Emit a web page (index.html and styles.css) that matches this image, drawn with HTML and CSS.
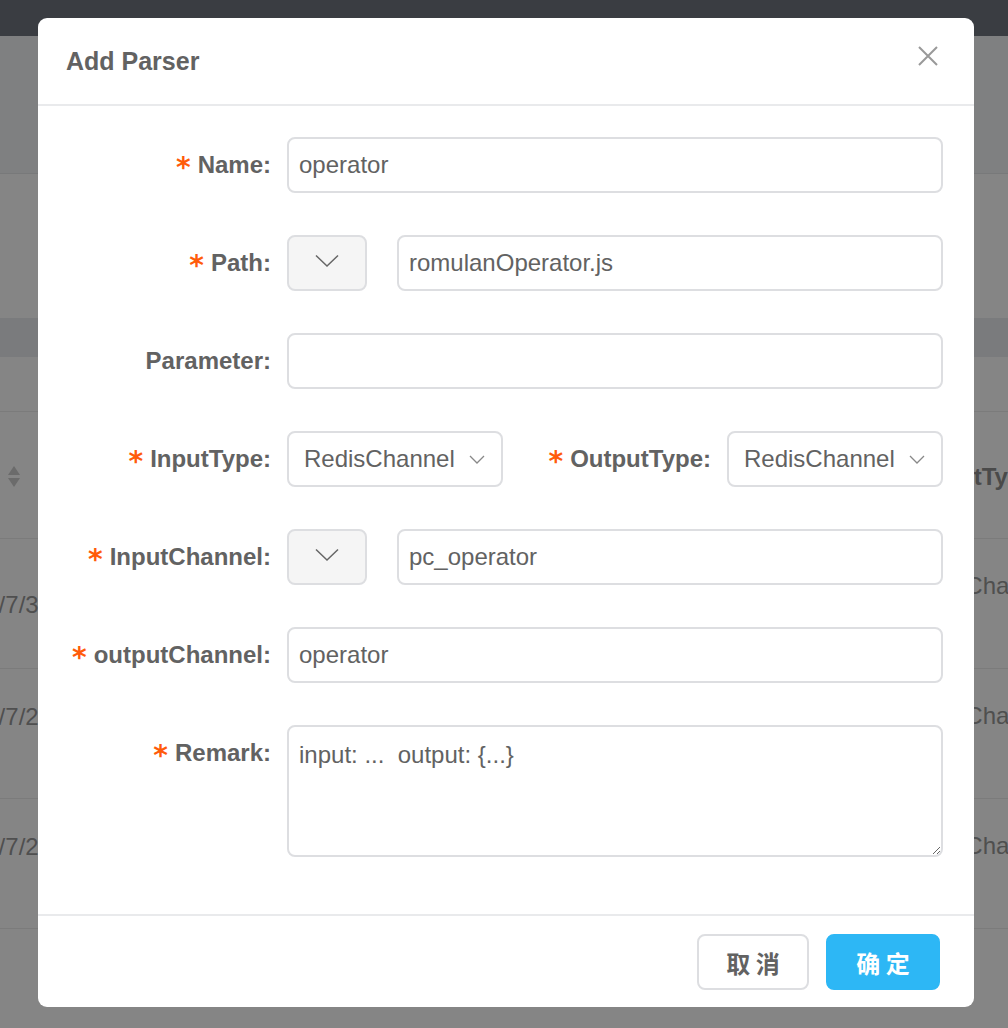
FILE: index.html
```html
<!DOCTYPE html>
<html lang="en">
<head>
<meta charset="utf-8">
<title>Add Parser</title>
<link rel="stylesheet" href="styles.css">
</head>
<body>
<div class="page">
  <div class="topbar"></div>
  <div class="sec-a"></div>
  <div class="sec-b"></div>
  <div class="band"></div>
  <div class="gap"></div>
  <div class="trow thead">
    <div class="lc-sort">
      <svg class="sort" width="14" height="21" viewBox="0 0 14 21"><path d="M7 0 L13 9 L1 9 Z" fill="#6b6b6b"/><path d="M1 12 L13 12 L7 21 Z" fill="#6b6b6b"/></svg>
    </div>
    <div class="sp"></div>
    <div class="rc rc-head">OutputType</div>
  </div>
  <div class="trow">
    <div class="lc lc-low"><span>2019/7/30</span></div>
    <div class="sp"></div>
    <div class="rc">RedisChannel</div>
  </div>
  <div class="trow">
    <div class="lc"><span>2019/7/29</span></div>
    <div class="sp"></div>
    <div class="rc">RedisChannel</div>
  </div>
  <div class="trow">
    <div class="lc"><span>2019/7/29</span></div>
    <div class="sp"></div>
    <div class="rc">RedisChannel</div>
  </div>
</div>

<div class="modal">
  <div class="m-head">
    <div class="m-title">Add Parser</div>
    <svg class="m-close" width="20" height="20" viewBox="0 0 20 20"><path d="M1 1 L19 19 M19 1 L1 19" stroke="#999" stroke-width="2" fill="none"/></svg>
  </div>
  <div class="m-body">
    <div class="row">
      <div class="label"><span class="req">*</span>Name:</div>
      <input class="inp" type="text" value="operator">
    </div>
    <div class="row">
      <div class="label"><span class="req">*</span>Path:</div>
      <div class="sel-sm"><svg width="24" height="14" viewBox="0 0 24 14"><path d="M1 1.5 L12 12 L23 1.5" stroke="#666" stroke-width="1.5" fill="none"/></svg></div>
      <input class="inp" type="text" value="romulanOperator.js">
    </div>
    <div class="row">
      <div class="label">Parameter:</div>
      <input class="inp" type="text" value="">
    </div>
    <div class="row">
      <div class="label"><span class="req">*</span>InputType:</div>
      <div class="sel"><span>RedisChannel</span><svg width="16" height="9" viewBox="0 0 16 9"><path d="M1 1 L8 8 L15 1" stroke="#888" stroke-width="1.3" fill="none"/></svg></div>
      <div class="label label-fill"><span class="req">*</span>OutputType:</div>
      <div class="sel"><span>RedisChannel</span><svg width="16" height="9" viewBox="0 0 16 9"><path d="M1 1 L8 8 L15 1" stroke="#888" stroke-width="1.3" fill="none"/></svg></div>
    </div>
    <div class="row">
      <div class="label"><span class="req">*</span>InputChannel:</div>
      <div class="sel-sm"><svg width="24" height="14" viewBox="0 0 24 14"><path d="M1 1.5 L12 12 L23 1.5" stroke="#666" stroke-width="1.5" fill="none"/></svg></div>
      <input class="inp" type="text" value="pc_operator">
    </div>
    <div class="row">
      <div class="label"><span class="req">*</span>outputChannel:</div>
      <input class="inp" type="text" value="operator">
    </div>
    <div class="row">
      <div class="label"><span class="req">*</span>Remark:</div>
      <textarea class="ta">input: ...  output: {...}</textarea>
    </div>
  </div>
  <div class="m-foot">
    <button class="btn btn-cancel">取 消</button>
    <button class="btn btn-ok">确 定</button>
  </div>
</div>
</body>
</html>
```

FILE: styles.css
```css
* { box-sizing: border-box; }

html, body {
  margin: 0;
  padding: 0;
}

body {
  width: 1008px;
  height: 1028px;
  overflow: hidden;
  position: relative;
  background: #858585;
  font-family: "Liberation Sans", Arial, sans-serif;
}

/* dimmed page behind the dialog */
.page { width: 1008px; }
.topbar { height: 36px; background: #3a3d42; }
.sec-a { height: 138px; background: #7f8081; border-bottom: 1px solid #78797a; }
.sec-b { height: 144px; background: #858585; }
.band { height: 39px; background: #7a7b7d; }
.gap { height: 55px; border-bottom: 1px solid #7b7b7b; }

.trow {
  display: flex;
  height: 130px;
  border-bottom: 1px solid #7b7b7b;
  font-size: 24px;
  line-height: 28px;
  color: #4f4f4f;
}
.thead { height: 127px; }

.lc {
  width: 52px;
  flex-shrink: 0;
  display: flex;
  justify-content: flex-end;
  white-space: nowrap;
  padding-top: 34px;
}
.lc-low { padding-top: 52px; }
.lc-sort { width: 52px; padding: 54px 0 0 7px; }
.sort { display: block; }
.sp { flex: 1; }
.rc {
  width: 111px;
  flex-shrink: 0;
  white-space: nowrap;
  overflow: hidden;
  padding-top: 33px;
  padding-left: 7px;
}
.rc-head { font-weight: bold; padding-top: 51px; padding-left: 6px; color: #4a4a4a; }

/* dialog */
.modal {
  position: absolute;
  left: 38px;
  top: 18px;
  width: 936px;
  height: 989px;
  background: #fff;
  border-radius: 9px;
  display: flex;
  flex-direction: column;
  overflow: hidden;
}

.m-head {
  height: 88px;
  flex-shrink: 0;
  border-bottom: 2px solid #e9eaec;
  display: flex;
  align-items: center;
  justify-content: space-between;
  padding: 0 36px 0 28px;
}
.m-title {
  font-size: 25px;
  font-weight: bold;
  color: #626262;
}
.m-close { align-self: flex-start; margin-top: 28px; display: block; }

.m-body {
  flex: 1;
  padding: 31px 31px 0 28px;
}
.row {
  display: flex;
  align-items: flex-start;
  margin-bottom: 42px;
}
.row:last-child { margin-bottom: 0; }

.label {
  width: 221px;
  height: 56px;
  flex-shrink: 0;
  padding-right: 16px;
  text-align: right;
  font-size: 24px;
  font-weight: bold;
  color: #626262;
  line-height: 56px;
  white-space: nowrap;
}
.label-fill { flex: 1; width: auto; }

.req {
  color: #ff5b0a;
  font-family: "DejaVu Sans", sans-serif;
  font-size: 28px;
  font-weight: bold;
  line-height: 20px;
  margin-right: 7px;
  vertical-align: -4px;
}

.inp {
  flex: 1;
  min-width: 0;
  height: 56px;
  border: 2px solid #dddee1;
  border-radius: 8px;
  padding: 0 10px;
  font-family: "Liberation Sans", Arial, sans-serif;
  font-size: 24px;
  color: #626262;
  background: #fff;
  outline: none;
}

.sel-sm {
  width: 80px;
  height: 56px;
  flex-shrink: 0;
  margin-right: 30px;
  background: #f5f5f5;
  border: 2px solid #dddee1;
  border-radius: 8px;
  display: flex;
  align-items: center;
  justify-content: center;
}
.sel-sm svg { display: block; margin-top: -4px; }

.sel {
  width: 216px;
  height: 56px;
  flex-shrink: 0;
  border: 2px solid #dddee1;
  border-radius: 8px;
  display: flex;
  align-items: center;
  justify-content: space-between;
  padding: 0 16px 0 15px;
  font-size: 24px;
  color: #626262;
  background: #fff;
}
.sel svg { display: block; }

.ta {
  flex: 1;
  height: 132px;
  border: 2px solid #dddee1;
  border-radius: 8px;
  padding: 11px 10px;
  font-family: "Liberation Sans", Arial, sans-serif;
  font-size: 24px;
  line-height: 34px;
  color: #626262;
  resize: vertical;
  outline: none;
  display: block;
}

.m-foot {
  flex-shrink: 0;
  border-top: 2px solid #e9eaec;
  padding: 18px 34px 17px;
  display: flex;
  justify-content: flex-end;
  gap: 17px;
}
.btn {
  height: 56px;
  border-radius: 8px;
  font-family: "Noto Sans CJK SC", sans-serif;
  font-size: 24px;
  font-weight: bold;
  padding: 0;
  cursor: pointer;
}
.btn-cancel {
  width: 112px;
  background: #fff;
  border: 2px solid #dddee1;
  color: #626262;
}
.btn-ok {
  width: 114px;
  background: #2db7f5;
  border: 2px solid #2db7f5;
  color: #fff;
}
```
